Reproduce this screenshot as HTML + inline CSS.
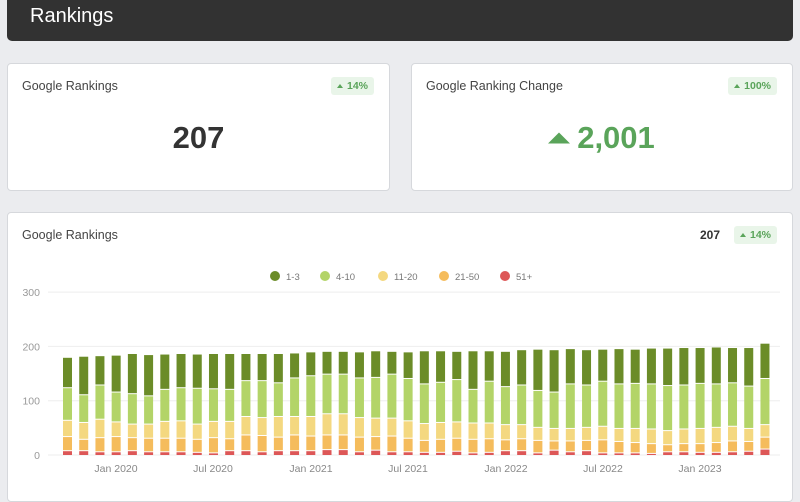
<!DOCTYPE html><html><head><style>
body{margin:0;width:800px;height:480px;overflow:hidden;background:#ebecef;font-family:"Liberation Sans",sans-serif;position:relative}
.hdr{position:absolute;left:7px;top:-5px;width:786px;height:46px;background:#323232;border-radius:5px;color:#fff;font-size:20px}
.hdr span{position:absolute;left:23px;top:10px}
.card{position:absolute;background:#fff;border:1px solid #d6d8dc;border-radius:4px;box-sizing:border-box}
.t{position:absolute;left:14px;top:15px;font-size:12.5px;color:#444}
.badge{position:absolute;background:#e9f5e9;color:#5aa45a;font-size:10.5px;font-weight:bold;height:18px;line-height:18px;padding:0 6px;border-radius:3px}
.badge:before{content:"";display:inline-block;border-left:3.5px solid transparent;border-right:3.5px solid transparent;border-bottom:4px solid #5aa45a;margin-right:4px;vertical-align:1px}
.big{position:absolute;left:0;right:0;text-align:center;font-weight:bold;font-size:31px}
</style></head><body>
<div class="hdr"><span>Rankings</span></div>
<div class="card" style="left:7px;top:63px;width:383px;height:128px">
<div class="t">Google Rankings</div><div class="badge" style="right:15px;top:13px">14%</div>
<div class="big" style="top:56px;color:#333">207</div></div>
<div class="card" style="left:411px;top:63px;width:382px;height:128px">
<div class="t">Google Ranking Change</div><div class="badge" style="right:15px;top:13px">100%</div>
<div class="big" style="top:56px;color:#5aa45a"><span style="display:inline-block;width:20px;height:10px;background:#5aa45a;border-radius:10px 10px 0 0;clip-path:polygon(50% 0,100% 100%,0 100%);margin-right:8px;vertical-align:5px;transform:scale(1.1)"></span>2,001</div></div>
<div class="card" style="left:7px;top:212px;width:786px;height:290px">
<div class="t">Google Rankings</div>
<div style="position:absolute;right:72px;top:15px;font-size:12px;font-weight:bold;color:#333">207</div>
<div class="badge" style="right:15px;top:13px">14%</div>
</div>
<svg id="ch" width="800" height="480" style="position:absolute;left:0;top:0" font-family="Liberation Sans" font-size="10.5"></svg>
<script>
var T=[179,181,182,183,186,184,185,186,185,186,186,186,186,186,187,189,190,190,189,191,190,189,191,191,190,191,191,190,193,194,193,195,193,194,195,194,196,196,197,197,198,197,197,205];
var C=[123,110,128,115,112,108,120,123,122,121,120,136,136,132,141,145,148,148,141,142,148,140,130,133,138,120,135,125,128,118,115,130,128,135,130,131,130,127,128,131,130,132,126,140];
var Y=[63,59,65,60,56,56,61,62,56,61,61,70,68,70,70,70,75,75,68,67,67,62,57,59,60,58,58,55,55,50,48,48,50,52,48,48,47,44,47,48,50,52,48,55];
var O=[33,28,31,33,31,30,30,30,28,31,29,36,35,32,36,34,36,36,32,33,34,30,26,28,30,28,29,27,29,26,25,25,26,27,24,22,20,18,20,20,22,25,24,32];
var R=[7,7,5,5,7,5,5,5,4,3,7,7,5,7,7,7,9,9,5,8,5,5,4,4,6,3,4,7,7,3,8,5,7,3,3,3,2,5,5,4,4,5,6,10];
var s='',b=455,k=0.543;
[0,100,200,300].forEach(function(v){var y=b-v*k;s+='<line x1="48" x2="780" y1="'+y+'" y2="'+y+'" stroke="#eee"/><text x="40" y="'+(y+4)+'" text-anchor="end" fill="#999">'+v+'</text>';});
var cols=['#dd5757','#f5bc5c','#f4d880','#b3d468','#6b8c28'];
for(var i=0;i<44;i++){var x=63+i*16.22;var v=[0,R[i],O[i],Y[i],C[i],T[i]];
for(var j=0;j<5;j++){var y1=b-v[j+1]*k,y0=b-v[j]*k;s+='<rect x="'+x+'" y="'+y1+'" width="9" height="'+Math.max(0,y0-y1-(j?1:0))+'" fill="'+cols[j]+'"/>';}}
[['Jan 2020',116],['Jul 2020',213],['Jan 2021',311],['Jul 2021',408],['Jan 2022',506],['Jul 2022',603],['Jan 2023',700]].forEach(function(a){s+='<text x="'+a[1]+'" y="472" text-anchor="middle" fill="#888">'+a[0]+'</text>';});
[['1-3',275,'#6b8c28'],['4-10',325,'#b3d468'],['11-20',383,'#f4d880'],['21-50',444,'#f5bc5c'],['51+',505,'#dd5757']].forEach(function(a){s+='<circle cx="'+a[1]+'" cy="276" r="5" fill="'+a[2]+'"/><text x="'+(a[1]+11)+'" y="280" font-size="9.5" fill="#777">'+a[0]+'</text>';});
document.getElementById('ch').innerHTML=s;
</script>
</body></html>
